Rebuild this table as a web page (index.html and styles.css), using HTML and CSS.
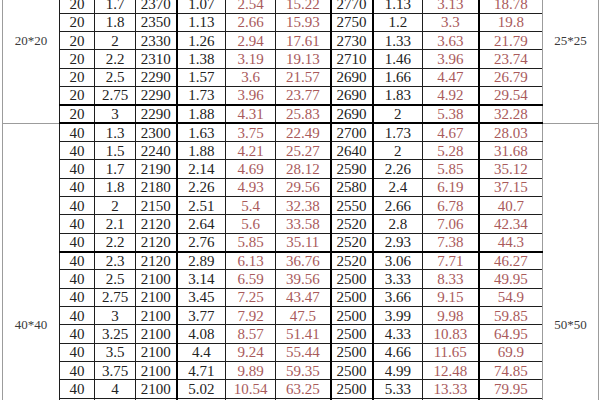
FILE: index.html
```html
<!DOCTYPE html>
<html lang="zh">
<head>
<meta charset="utf-8">
<title>方管规格重量表</title>
<link rel="stylesheet" href="styles.css">
</head>
<body>
<div class="sheet">
<table class="grid">
<colgroup>
<col class="c0"><col class="c1"><col class="c2"><col class="c3"><col class="c4 tk"><col class="c5"><col class="c6"><col class="c7 tk"><col class="c8 tk"><col class="c9"><col class="c10 tk"><col class="c11">
</colgroup>
<tbody>
<tr><td class="lab left" rowspan="9">20*20</td><td>20</td><td>1.3</td><td>2420</td><td>0.83</td><td class="r">2.01</td><td class="r">12.05</td><td>2820</td><td>0.87</td><td class="r">2.45</td><td class="r e">14.72</td><td class="lab right" rowspan="9">25*25</td></tr>
<tr><td>20</td><td>1.5</td><td>2390</td><td>0.95</td><td class="r">2.27</td><td class="r">13.62</td><td>2790</td><td>1</td><td class="r">2.79</td><td class="r e">16.74</td></tr>
<tr><td>20</td><td>1.7</td><td>2370</td><td>1.07</td><td class="r">2.54</td><td class="r">15.22</td><td>2770</td><td>1.13</td><td class="r">3.13</td><td class="r e">18.78</td></tr>
<tr><td>20</td><td>1.8</td><td>2350</td><td>1.13</td><td class="r">2.66</td><td class="r">15.93</td><td>2750</td><td>1.2</td><td class="r">3.3</td><td class="r e">19.8</td></tr>
<tr><td>20</td><td>2</td><td>2330</td><td>1.26</td><td class="r">2.94</td><td class="r">17.61</td><td>2730</td><td>1.33</td><td class="r">3.63</td><td class="r e">21.79</td></tr>
<tr><td>20</td><td>2.2</td><td>2310</td><td>1.38</td><td class="r">3.19</td><td class="r">19.13</td><td>2710</td><td>1.46</td><td class="r">3.96</td><td class="r e">23.74</td></tr>
<tr><td>20</td><td>2.5</td><td>2290</td><td>1.57</td><td class="r">3.6</td><td class="r">21.57</td><td>2690</td><td>1.66</td><td class="r">4.47</td><td class="r e">26.79</td></tr>
<tr><td>20</td><td>2.75</td><td>2290</td><td>1.73</td><td class="r">3.96</td><td class="r">23.77</td><td>2690</td><td>1.83</td><td class="r">4.92</td><td class="r e">29.54</td></tr>
<tr class="hv"><td>20</td><td>3</td><td>2290</td><td>1.88</td><td class="r">4.31</td><td class="r">25.83</td><td>2690</td><td>2</td><td class="r">5.38</td><td class="r e">32.28</td></tr>
<tr class="grp"><td class="lab left" rowspan="22">40*40</td><td>40</td><td>1.3</td><td>2300</td><td>1.63</td><td class="r">3.75</td><td class="r">22.49</td><td>2700</td><td>1.73</td><td class="r">4.67</td><td class="r e">28.03</td><td class="lab right" rowspan="22">50*50</td></tr>
<tr><td>40</td><td>1.5</td><td>2240</td><td>1.88</td><td class="r">4.21</td><td class="r">25.27</td><td>2640</td><td>2</td><td class="r">5.28</td><td class="r e">31.68</td></tr>
<tr><td>40</td><td>1.7</td><td>2190</td><td>2.14</td><td class="r">4.69</td><td class="r">28.12</td><td>2590</td><td>2.26</td><td class="r">5.85</td><td class="r e">35.12</td></tr>
<tr><td>40</td><td>1.8</td><td>2180</td><td>2.26</td><td class="r">4.93</td><td class="r">29.56</td><td>2580</td><td>2.4</td><td class="r">6.19</td><td class="r e">37.15</td></tr>
<tr><td>40</td><td>2</td><td>2150</td><td>2.51</td><td class="r">5.4</td><td class="r">32.38</td><td>2550</td><td>2.66</td><td class="r">6.78</td><td class="r e">40.7</td></tr>
<tr><td>40</td><td>2.1</td><td>2120</td><td>2.64</td><td class="r">5.6</td><td class="r">33.58</td><td>2520</td><td>2.8</td><td class="r">7.06</td><td class="r e">42.34</td></tr>
<tr><td>40</td><td>2.2</td><td>2120</td><td>2.76</td><td class="r">5.85</td><td class="r">35.11</td><td>2520</td><td>2.93</td><td class="r">7.38</td><td class="r e">44.3</td></tr>
<tr class="hv"><td>40</td><td>2.3</td><td>2120</td><td>2.89</td><td class="r">6.13</td><td class="r">36.76</td><td>2520</td><td>3.06</td><td class="r">7.71</td><td class="r e">46.27</td></tr>
<tr><td>40</td><td>2.5</td><td>2100</td><td>3.14</td><td class="r">6.59</td><td class="r">39.56</td><td>2500</td><td>3.33</td><td class="r">8.33</td><td class="r e">49.95</td></tr>
<tr><td>40</td><td>2.75</td><td>2100</td><td>3.45</td><td class="r">7.25</td><td class="r">43.47</td><td>2500</td><td>3.66</td><td class="r">9.15</td><td class="r e">54.9</td></tr>
<tr><td>40</td><td>3</td><td>2100</td><td>3.77</td><td class="r">7.92</td><td class="r">47.5</td><td>2500</td><td>3.99</td><td class="r">9.98</td><td class="r e">59.85</td></tr>
<tr><td>40</td><td>3.25</td><td>2100</td><td>4.08</td><td class="r">8.57</td><td class="r">51.41</td><td>2500</td><td>4.33</td><td class="r">10.83</td><td class="r e">64.95</td></tr>
<tr><td>40</td><td>3.5</td><td>2100</td><td>4.4</td><td class="r">9.24</td><td class="r">55.44</td><td>2500</td><td>4.66</td><td class="r">11.65</td><td class="r e">69.9</td></tr>
<tr><td>40</td><td>3.75</td><td>2100</td><td>4.71</td><td class="r">9.89</td><td class="r">59.35</td><td>2500</td><td>4.99</td><td class="r">12.48</td><td class="r e">74.85</td></tr>
<tr><td>40</td><td>4</td><td>2100</td><td>5.02</td><td class="r">10.54</td><td class="r">63.25</td><td>2500</td><td>5.33</td><td class="r">13.33</td><td class="r e">79.95</td></tr>
<tr><td>40</td><td>4.5</td><td>2100</td><td>5.65</td><td class="r">11.86</td><td class="r">71.16</td><td>2500</td><td>5.99</td><td class="r">14.98</td><td class="r e">89.88</td></tr>
<tr><td>40</td><td>5</td><td>2100</td><td>6.28</td><td class="r">13.19</td><td class="r">79.13</td><td>2500</td><td>6.66</td><td class="r">16.65</td><td class="r e">99.9</td></tr>
<tr><td>40</td><td>5.5</td><td>2100</td><td>6.91</td><td class="r">14.51</td><td class="r">87.06</td><td>2500</td><td>7.33</td><td class="r">18.33</td><td class="r e">109.95</td></tr>
<tr><td>40</td><td>6</td><td>2100</td><td>7.54</td><td class="r">15.83</td><td class="r">94.99</td><td>2500</td><td>7.99</td><td class="r">19.98</td><td class="r e">119.88</td></tr>
<tr><td>40</td><td>6.5</td><td>2100</td><td>8.16</td><td class="r">17.14</td><td class="r">102.82</td><td>2500</td><td>8.66</td><td class="r">21.65</td><td class="r e">129.9</td></tr>
<tr><td>40</td><td>7</td><td>2100</td><td>8.79</td><td class="r">18.46</td><td class="r">110.75</td><td>2500</td><td>9.32</td><td class="r">23.3</td><td class="r e">139.8</td></tr>
<tr><td>40</td><td>8</td><td>2100</td><td>10.05</td><td class="r">21.11</td><td class="r">126.63</td><td>2500</td><td>10.66</td><td class="r">26.65</td><td class="r e">159.9</td></tr>
</tbody>
</table>
</div>
</body>
</html>
```
FILE: styles.css
```css
html, body {
  margin: 0;
  padding: 0;
  background: #ffffff;
}

.sheet {
  width: 600px;
  height: 400px;
  overflow: hidden;
}

.grid {
  border-collapse: collapse;
  table-layout: fixed;
  width: 596px;
  margin: -42.5px 0 0 2px;
  font-family: "Liberation Serif", "DejaVu Serif", serif;
  font-size: 15px;
  line-height: 16px;
  color: #222222;
}

.c0 { width: 57px; }
.c1 { width: 35px; }
.c2 { width: 41px; }
.c3 { width: 41px; }
.c4 { width: 49px; }
.c5 { width: 50px; }
.c6 { width: 55px; }
.c7 { width: 42px; }
.c8 { width: 50px; }
.c9 { width: 56px; }
.c10 { width: 64px; }
.c11 { width: 56px; }

.grid col.tk {
  border-left: 2px solid #000000;
}

.grid tr {
  height: 18.35px;
}

.grid td {
  padding: 0;
  text-align: center;
  vertical-align: middle;
  white-space: nowrap;
  overflow: hidden;
  border: 1px solid #1e1e1e;
}

.grid td.r {
  color: #a95a5b;
}

.grid td.e {
  border-right-color: #9c9c9c;
}

.grid td.lab {
  border-color: #9c9c9c;
  font-size: 13px;
  color: #3a3a3a;
}

.grid td.lab.left {
  border-right-color: #1e1e1e;
}

.grid tr.hv td:not(.lab) {
  border-top: 2px solid #000000;
}

.grid tr.grp td:not(.lab) {
  border-top: 2px solid #000000;
}
```
